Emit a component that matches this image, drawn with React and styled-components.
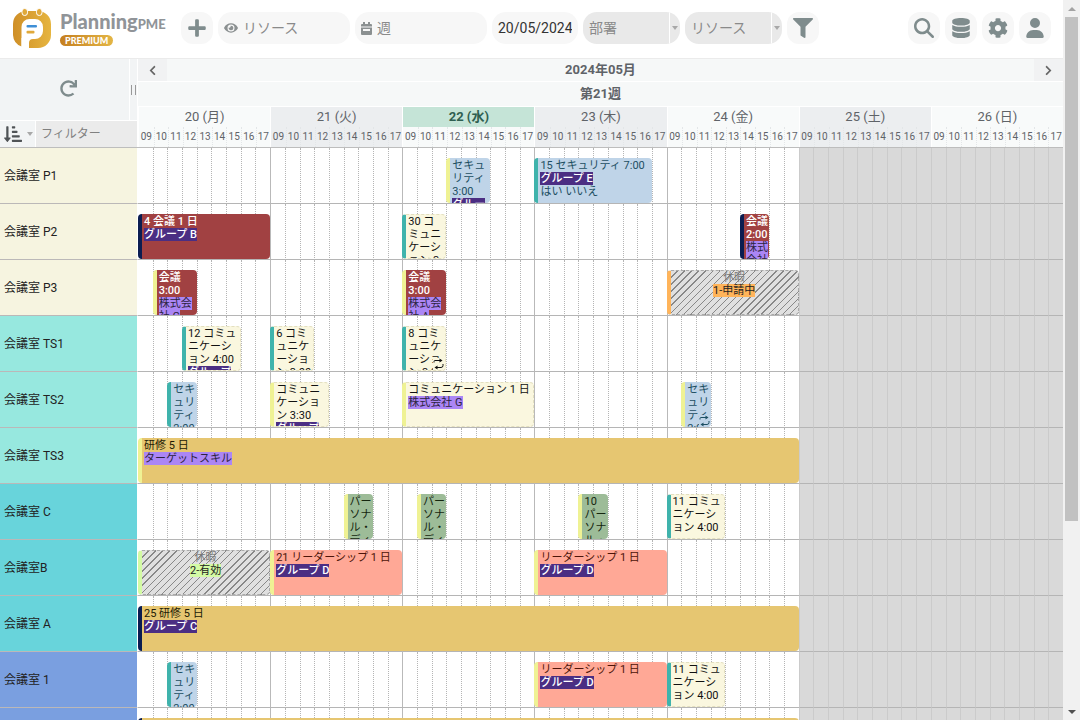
import React from 'react';
import styled, { createGlobalStyle, css } from 'styled-components';
import {
  FaPlus, FaEye, FaFilter, FaDatabase, FaCog, FaRedo, FaChevronLeft, FaChevronRight, FaSortAmountDownAlt,
} from 'react-icons/fa';
import { FaMagnifyingGlass, FaUser } from 'react-icons/fa6';

const GlobalStyle = createGlobalStyle`
  * {
    box-sizing: border-box;
  }

  body {
    margin: 0;
    background: #fff;
    overflow: hidden;
  }

  body, button, input, select {
    font-family: Roboto, "Noto Sans CJK JP", sans-serif;
  }
`;

const Page = styled.div`
  display: flex;
  height: 100vh;
  overflow: hidden;
`;

const Main = styled.main`
  flex: 1;
  min-width: 0;
  overflow: hidden;
`;

/* ---------- Toolbar ---------- */

const Toolbar = styled.header`
  display: flex;
  align-items: center;
  gap: 5px;
  height: 59px;
  padding: 0 12px 2px 13px;
  border-bottom: 1px solid #ebebeb;
`;

const Brand = styled.a`
  display: flex;
  align-items: center;
  gap: 9px;
  width: 163px;
  color: #909498;
  text-decoration: none;
`;

const BrandText = styled.div`
  display: flex;
  flex-direction: column;
  align-items: flex-start;
  padding-bottom: 1px;
`;

const Wordmark = styled.span`
  font-family: Lato, sans-serif;
  font-weight: 900;
  font-size: 20px;
  line-height: 22px;
  white-space: nowrap;

  small {
    font-size: 13px;
  }
`;

const Premium = styled.span`
  padding: 0 5px;
  border-radius: 6px;
  background: linear-gradient(90deg, #c57f20, #e3b545);
  color: #fff;
  font-family: Lato, sans-serif;
  font-weight: 900;
  font-size: 9px;
  line-height: 11px;
`;

const RoundButton = styled.button`
  display: flex;
  align-items: center;
  justify-content: center;
  width: 32px;
  height: 32px;
  padding: 0;
  border: 0;
  border-radius: 12px;
  background: #f7f7f7;
  color: #7f8c8d;
  font-size: 20px;
`;

const Field = styled.label`
  display: flex;
  align-items: center;
  gap: 5px;
  width: ${({ $width }) => $width}px;
  height: 32px;
  padding: 0 6px;
  border-radius: 14px;
  background: #f7f7f7;
  color: #8b9091;
  font-size: 14px;

  svg {
    flex: none;
  }

  input {
    flex: 1;
    min-width: 0;
    padding: 0;
    border: 0;
    outline: 0;
    background: none;
    color: #333;
    font-size: 14px;
  }

  input::placeholder {
    color: #8a8a8a;
    opacity: 1;
  }
`;

const Dropdown = styled.label`
  display: flex;
  align-items: center;
  width: 97px;
  height: 32px;
  border-radius: 14px;
  background: #e9e9e9;
  overflow: hidden;

  select {
    flex: 1;
    min-width: 0;
    height: 32px;
    padding: 0 6px;
    border: 0;
    border-right: 1px solid #fff;
    background: none;
    appearance: none;
    color: #8a8a8a;
    font-size: 14px;
  }
`;

const Caret = styled.span`
  margin: 0 2px;
  border: 3px solid transparent;
  border-top: 4px solid #a8a8a8;
  border-bottom: 0;
`;

const Actions = styled.nav`
  display: flex;
  gap: 5px;
  margin-left: auto;
`;

/* ---------- Planning head ---------- */

const Head = styled.div`
  display: grid;
  grid-template-columns: 138px minmax(0, 1fr);
  border-bottom: 1px solid #bdbdbd;
  color: #5f6368;
`;

const Corner = styled.div`
  display: grid;
  grid-template-rows: 61px 26px;
  row-gap: 1px;
  border-right: 1px solid #fff;
`;

const CornerTop = styled.div`
  display: grid;
  grid-template-columns: 1fr 7px;
  column-gap: 1px;
`;

const Refresh = styled.button`
  display: grid;
  place-items: center;
  padding: 0 0 2px 8px;
  border: 0;
  background: #f2f4f5;
  color: #7f8c8d;
  font-size: 17px;
`;

const Handle = styled.span`
  display: flex;
  align-items: center;
  justify-content: center;
  background: #f2f4f5;

  &::before {
    content: '';
    width: 3px;
    height: 10px;
    border: solid #999;
    border-width: 0 1px;
  }
`;

const FilterRow = styled.div`
  display: grid;
  grid-template-columns: 35px 1fr;
  column-gap: 1px;

  input {
    min-width: 0;
    padding: 0 5px;
    border: 0;
    background: #ebebeb;
    color: #333;
    font-size: 12px;
  }

  input::placeholder {
    color: #808080;
    opacity: 1;
  }
`;

const SortButton = styled.button`
  display: flex;
  align-items: center;
  justify-content: space-between;
  padding: 0 0 0 4px;
  border: 0;
  background: #f2f4f5;
  color: #4f5356;
  font-size: 18px;
`;

const Calendar = styled.div`
  display: grid;
  grid-template-rows: 22px 24px 40px;
  row-gap: 1px;
`;

const MonthRow = styled.div`
  display: grid;
  grid-template-columns: 29px 1fr 29px;
  background: #f6f8f8;
  text-align: center;
  font-weight: 700;
  font-size: 13px;
  line-height: 22px;
`;

const StepButton = styled.button`
  display: grid;
  place-items: center;
  padding: 0;
  border: 0;
  background: #f1f2f3;
  color: #666;
  font-size: 11px;
`;

const WeekRow = styled.div`
  background: #f6f8f8;
  text-align: center;
  font-weight: 700;
  font-size: 13px;
  line-height: 24px;
`;

const Days = styled.div`
  display: grid;
  grid-template-columns: repeat(7, minmax(0, 1fr));
`;

const Day = styled.div`
  border-left: 1px solid #fff;
  background: ${({ $shaded }) => ($shaded ? '#eceef0' : '#f8fafa')};
`;

const DayName = styled.div`
  text-align: center;
  font-size: 13px;
  line-height: 20px;

  ${({ $today }) => $today && css`
    background: #c5e4d7;
    color: #2f5f50;
    font-weight: 700;
  `}
`;

const Hours = styled.div`
  display: grid;
  grid-template-columns: repeat(9, minmax(0, 1fr));
  text-align: center;
  font-size: 10px;
  line-height: 20px;

  span + span {
    border-left: 1px dotted #e3e6e8;
  }
`;

/* ---------- Planning body ---------- */

const Row = styled.div`
  display: grid;
  grid-template-columns: 138px minmax(0, 1fr);
  height: 56px;
`;

const RowLabel = styled.div`
  padding: 1px 0 0 4px;
  border-right: 1px solid #fff;
  border-bottom: 1px solid #bbb8b8;
  background: ${({ $color }) => $color};
  color: #222;
  font-size: 12px;
  line-height: 54px;
`;

const Lane = styled.div`
  display: grid;
  grid-template-columns: repeat(63, minmax(0, 1fr));
  grid-template-rows: 56px;
`;

const Cell = styled.span`
  grid-row: 1;
  grid-column: ${({ $col }) => $col};
  border-left: 1px ${({ $dayStart }) => ($dayStart ? 'solid #b9b9b9' : 'dotted #b5b5b5')};
  border-bottom: 1px solid #b5b5b5;

  &:first-child {
    border-left: 0;
  }

  ${({ $weekend }) => $weekend && css`
    border-left: 1px solid #cbcbcb;
    background: #d9d9d9;
  `}
`;

const themes = {
  security: css`
    background: #bfd4e8;
    color: #1d4f63;
  `,
  meeting: css`
    background: #a14142;
    color: #fff;
    font-weight: 500;
  `,
  communication: css`
    border: 1px dashed #e3dfc0;
    border-left: 4px solid;
    padding: 0 0 0 2px;
    background: #faf7df;
    color: #111;
  `,
  training: css`
    background: #e6c671;
    color: #221a05;
  `,
  personal: css`
    background: #9dbc98;
    color: #15260f;
  `,
  leadership: css`
    background: #ffa896;
    color: #4d1409;
  `,
  leave: css`
    border: 1px dashed #aaa;
    border-left: 4px solid;
    padding: 0;
    background: repeating-linear-gradient(135deg, #e0e0e0 0 4px, #888 4px 5px);
    color: #777;
    text-align: center;
  `,
};

const Task = styled.article`
  position: relative;
  grid-row: 1;
  grid-column: ${({ $start, $span }) => `${$start + 1} / span ${$span}`};
  height: 45px;
  margin-top: 10px;
  padding: 1px 1px 0 2px;
  border-left: 4px solid;
  border-radius: 4px;
  overflow: hidden;
  font-size: 11px;
  line-height: 13px;
  word-break: break-all;
  line-break: anywhere;
  white-space: pre-line;
  ${({ $kind }) => themes[$kind]}
  border-left-color: ${({ $bar }) => $bar};
`;

const tags = {
  group: css`
    background: #4b2e83;
    color: #fff;
    font-weight: 500;
  `,
  client: css`
    background: #ab86f5;
    color: #2c2440;
    font-weight: 400;
  `,
  pending: css`
    background: #ffb45a;
    color: #222;
  `,
  valid: css`
    background: #d3fba4;
    color: #222;
  `,
};

const Tag = styled.span`
  ${({ $tag }) => tags[$tag]}
`;

const Repeat = styled.svg`
  position: absolute;
  right: 1px;
  bottom: 0;
  background: inherit;
`;

/* ---------- Scrollbar ---------- */

const Scrollbar = styled.div`
  display: flex;
  flex-direction: column;
  width: 17px;
  padding: 0 2px;
  background: #f1f1f1;
`;

const ScrollArrow = styled.span`
  display: grid;
  place-items: center;
  height: 17px;

  &::before {
    content: '';
    border: 4px solid transparent;
    ${({ $up }) => ($up
    ? 'border-bottom-color: #a3a3a3; border-top: 0;'
    : 'border-top-color: #505050; border-bottom: 0;')}
  }
`;

const Thumb = styled.span`
  flex: 504;
  background: #c1c1c1;
`;

const Track = styled.span`
  flex: 182;
`;

const TEAL = '#3fb3ac';
const YELLOW = '#eff294';
const NAVY = '#0b1d51';

const days = ['20 (月)', '21 (火)', '22 (水)', '23 (木)', '24 (金)', '25 (土)', '26 (日)'];
const hours = ['09', '10', '11', '12', '13', '14', '15', '16', '17'];

// start and span are counted in hour columns from Monday 09:00
const rows = [
  {
    name: '会議室 P1',
    color: '#f6f4e0',
    tasks: [
      { start: 21, span: 3, kind: 'security', bar: YELLOW, title: 'セキュリティ 3:00', tag: 'group', label: 'グループ A' },
      { start: 27, span: 8, kind: 'security', bar: TEAL, title: '15 セキュリティ 7:00', tag: 'group', label: 'グループ E', note: 'はい いいえ' },
    ],
  },
  {
    name: '会議室 P2',
    color: '#f6f4e0',
    tasks: [
      { start: 0, span: 9, kind: 'meeting', bar: NAVY, title: '4 会議 1 日', tag: 'group', label: 'グループ B' },
      { start: 18, span: 3, kind: 'communication', bar: TEAL, title: '30 コ\nミュニケーション 3:00' },
      { start: 41, span: 2, kind: 'meeting', bar: NAVY, title: '会議\n2:00', tag: 'client', label: '株式会社 A' },
    ],
  },
  {
    name: '会議室 P3',
    color: '#f6f4e0',
    tasks: [
      { start: 1, span: 3, kind: 'meeting', bar: YELLOW, title: '会議\n3:00', tag: 'client', label: '株式会社 G' },
      { start: 18, span: 3, kind: 'meeting', bar: YELLOW, title: '会議\n3:00', tag: 'client', label: '株式会社 A' },
      { start: 36, span: 9, kind: 'leave', bar: '#ffb45a', title: '休暇', tag: 'pending', label: '1-申請中' },
    ],
  },
  {
    name: '会議室 TS1',
    color: '#97e8df',
    tasks: [
      { start: 3, span: 4, kind: 'communication', bar: TEAL, title: '12 コミュニケーション 4:00', tag: 'group', label: 'グループ A' },
      { start: 9, span: 3, kind: 'communication', bar: TEAL, title: '6 コミュニケーション 3:00' },
      { start: 18, span: 3, kind: 'communication', bar: TEAL, title: '8 コミュニケーション 3:00', repeat: true },
    ],
  },
  {
    name: '会議室 TS2',
    color: '#97e8df',
    tasks: [
      { start: 2, span: 2, kind: 'security', bar: TEAL, title: 'セキュリティ 2:00' },
      { start: 9, span: 4, kind: 'communication', bar: YELLOW, title: 'コミュニケーション 3:30', tag: 'group', label: 'グループ A' },
      { start: 18, span: 9, kind: 'communication', bar: YELLOW, title: 'コミュニケーション 1 日', tag: 'client', label: '株式会社 G' },
      { start: 37, span: 2, kind: 'security', bar: YELLOW, title: 'セキュリティ 2:00', repeat: true },
    ],
  },
  {
    name: '会議室 TS3',
    color: '#97e8df',
    tasks: [
      { start: 0, span: 45, kind: 'training', bar: YELLOW, title: '研修 5 日', tag: 'client', label: 'ターゲットスキル' },
    ],
  },
  {
    name: '会議室 C',
    color: '#68d4db',
    tasks: [
      { start: 14, span: 2, kind: 'personal', bar: YELLOW, title: 'パーソナル・ディベロップメント' },
      { start: 19, span: 2, kind: 'personal', bar: YELLOW, title: 'パーソナル・ディベロップメント' },
      { start: 30, span: 2, kind: 'personal', bar: YELLOW, title: '10 パーソナル・ディベロップメント' },
      { start: 36, span: 4, kind: 'communication', bar: TEAL, title: '11 コミュニケーション 4:00' },
    ],
  },
  {
    name: '会議室B',
    color: '#68d4db',
    tasks: [
      { start: 0, span: 9, kind: 'leave', bar: '#d3fba4', title: '休暇', tag: 'valid', label: '2-有効' },
      { start: 9, span: 9, kind: 'leadership', bar: YELLOW, title: '21 リーダーシップ 1 日', tag: 'group', label: 'グループ D' },
      { start: 27, span: 9, kind: 'leadership', bar: YELLOW, title: 'リーダーシップ 1 日', tag: 'group', label: 'グループ D' },
    ],
  },
  {
    name: '会議室 A',
    color: '#68d4db',
    tasks: [
      { start: 0, span: 45, kind: 'training', bar: NAVY, title: '25 研修 5 日', tag: 'group', label: 'グループ C' },
    ],
  },
  {
    name: '会議室 1',
    color: '#7a9fe0',
    tasks: [
      { start: 2, span: 2, kind: 'security', bar: TEAL, title: 'セキュリティ 2:00' },
      { start: 27, span: 9, kind: 'leadership', bar: YELLOW, title: 'リーダーシップ 1 日', tag: 'group', label: 'グループ D' },
      { start: 36, span: 4, kind: 'communication', bar: TEAL, title: '11 コミュニケーション 4:00' },
    ],
  },
  {
    name: '',
    color: '#7a9fe0',
    tasks: [{ start: 0, span: 45, kind: 'training', bar: NAVY, title: '' }],
  },
];

const LogoMark = () => (
  <svg width="38" height="40" viewBox="0 0 38 40" aria-hidden="true">
    <defs>
      <linearGradient id="gold" x1="0" x2="1">
        <stop offset="0" stopColor="#cf8f27" />
        <stop offset="1" stopColor="#e6b540" />
      </linearGradient>
    </defs>
    <path d="M13 3h12a13 13 0 0 1 13 13v11a13 13 0 0 1-13 13H16V30H8.500v8.500A13 13 0 0 1 0 27V16A13 13 0 0 1 13 3z" fill="url(#gold)" />
    <path d="M8.500 40V19a8 8 0 0 1 8-8h5.500a8 8 0 0 1 8 8v4a8 8 0 0 1-8 8h-2q-4 0-4 4V40z" fill="#fff" />
    <rect x="9" y="0.500" width="5.500" height="7" rx="2.700" fill="#e0a93a" stroke="#fff" />
    <rect x="23.500" y="0.500" width="5.500" height="7" rx="2.700" fill="#e0a93a" stroke="#fff" />
    <rect x="13.500" y="17" width="10.500" height="2.600" rx="1" fill="#3f8fd6" />
    <rect x="13.500" y="22.800" width="8" height="2.600" rx="1" fill="#e0a93a" />
  </svg>
);

const CalendarIcon = () => (
  <svg width="11" height="13" viewBox="0 0 11 13" fill="currentColor" aria-hidden="true">
    <path d="M2 0h2v2h3V0h2v2h1a1 1 0 0 1 1 1v1.500H0V3a1 1 0 0 1 1-1h1z" />
    <path d="M0 5.500h11V12a1 1 0 0 1-1 1H1a1 1 0 0 1-1-1zM2 7v2h7V7z" fillRule="evenodd" />
  </svg>
);

const RepeatIcon = () => (
  <Repeat width="11" height="12" viewBox="0 0 11 12" fill="none" stroke="currentColor" aria-label="繰り返し">
    <path d="M1 4.500V3.500Q1 2.500 2 2.500H8M10 6V7.500Q10 9.500 8 9.500H3" />
    <path d="M6.500 0.500L9.500 2.500L6.500 4.500zM4.500 7.500L1.500 9.500L4.500 11.500z" fill="currentColor" stroke="none" />
  </Repeat>
);

const Event = ({ task }) => (
  <Task $start={task.start} $span={task.span} $kind={task.kind} $bar={task.bar}>
    {task.title}
    {task.label && (
      <>
        <br />
        <Tag $tag={task.tag}>{task.label}</Tag>
      </>
    )}
    {task.note && (
      <>
        <br />
        {task.note}
      </>
    )}
    {task.repeat && <RepeatIcon />}
  </Task>
);

const Cells = () => Array.from({ length: 63 }, (_, i) => (
  <Cell key={i} $col={i + 1} $dayStart={i % 9 === 0} $weekend={i >= 45} />
));

const App = () => (
  <Page>
    <GlobalStyle />
    <Main>
      <Toolbar>
        <Brand href="#">
          <LogoMark />
          <BrandText>
            <Wordmark>Planning<small>PME</small></Wordmark>
            <Premium>PREMIUM</Premium>
          </BrandText>
        </Brand>
        <RoundButton aria-label="追加"><FaPlus /></RoundButton>
        <Field $width={132}>
          <FaEye />
          <input aria-label="表示" placeholder="リソース" />
        </Field>
        <Field $width={132}>
          <CalendarIcon />
          <input aria-label="期間" placeholder="週" />
        </Field>
        <Field $width={86}>
          <input aria-label="日付" defaultValue="20/05/2024" />
        </Field>
        <Dropdown>
          <select aria-label="部署"><option>部署</option></select>
          <Caret />
        </Dropdown>
        <Dropdown>
          <select aria-label="リソース"><option>リソース</option></select>
          <Caret />
        </Dropdown>
        <RoundButton aria-label="絞り込み"><FaFilter /></RoundButton>
        <Actions>
          <RoundButton aria-label="検索"><FaMagnifyingGlass /></RoundButton>
          <RoundButton aria-label="データ"><FaDatabase /></RoundButton>
          <RoundButton aria-label="設定"><FaCog /></RoundButton>
          <RoundButton aria-label="アカウント"><FaUser /></RoundButton>
        </Actions>
      </Toolbar>

      {/* Month, week, day and hour headings */}
      <Head>
        <Corner>
          <CornerTop>
            <Refresh aria-label="更新"><FaRedo /></Refresh>
            <Handle />
          </CornerTop>
          <FilterRow>
            <SortButton aria-label="並べ替え">
              <FaSortAmountDownAlt />
              <Caret />
            </SortButton>
            <input aria-label="フィルター" placeholder="フィルター" />
          </FilterRow>
        </Corner>
        <Calendar>
          <MonthRow>
            <StepButton aria-label="前へ"><FaChevronLeft /></StepButton>
            <span>2024年05月</span>
            <StepButton aria-label="次へ"><FaChevronRight /></StepButton>
          </MonthRow>
          <WeekRow>第21週</WeekRow>
          <Days>
            {days.map((day, i) => (
              <Day key={day} $shaded={i % 2 === 1}>
                <DayName $today={i === 2}>{day}</DayName>
                <Hours>
                  {hours.map((hour) => <span key={hour}>{hour}</span>)}
                </Hours>
              </Day>
            ))}
          </Days>
        </Calendar>
      </Head>

      {/* One lane per room */}
      {rows.map((row, i) => (
        <Row key={i}>
          <RowLabel $color={row.color}>{row.name}</RowLabel>
          <Lane>
            <Cells />
            {row.tasks.map((task) => <Event key={task.start} task={task} />)}
          </Lane>
        </Row>
      ))}
    </Main>
    <Scrollbar>
      <ScrollArrow $up />
      <Thumb />
      <Track />
      <ScrollArrow />
    </Scrollbar>
  </Page>
);

export default App;
